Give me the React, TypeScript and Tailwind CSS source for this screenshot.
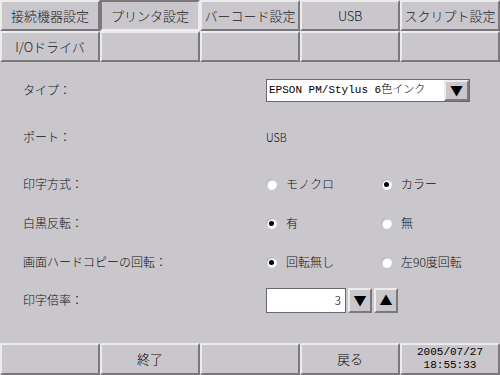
import React from "react";

const jp = { fontFamily: '"Noto Sans CJK JP", "Noto Sans", sans-serif' };
const mono = { fontFamily: '"Liberation Mono", "Noto Sans CJK JP", monospace' };

const bevel =
  "border-t-2 border-l-2 border-b-2 border-r-2 border-t-[#ececec] border-l-[#ececec] border-b-[#7a787c] border-r-[#7a787c]";
const sunk =
  "border-t-2 border-l-2 border-b-2 border-r-2 border-t-[#7a787c] border-l-[#7a787c] border-b-[#ececec] border-r-[#ececec]";

function Tab({ label, active, small }: { label?: string; active?: boolean; small?: boolean }) {
  return (
    <div
      className={`h-[31px] flex items-center justify-center bg-[#c9c6cc] text-[13px] text-[#1a1a1a] ${
        active ? sunk : bevel
      } ${small ? "text-[11px] tracking-tight" : ""}`}
    >
      {label}
    </div>
  );
}

function Radio({ checked, label }: { checked?: boolean; label: string }) {
  return (
    <div className="flex items-center gap-[9px]">
      <span className="w-[11px] h-[11px] rounded-full bg-white shadow-[inset_1px_1px_2px_rgba(0,0,0,0.35)] flex items-center justify-center">
        {checked && <span className="w-[5px] h-[5px] rounded-full bg-black" />}
      </span>
      <span className="text-[12px] text-[#111]">{label}</span>
    </div>
  );
}

function Row({ label, children, mt }: { label: string; children?: React.ReactNode; mt: string }) {
  return (
    <div className={`flex items-center h-[24px] ${mt}`}>
      <div className="w-[243px] text-[12px] text-[#111]">{label}</div>
      <div className="flex-1 flex items-center">{children}</div>
    </div>
  );
}

export default function App() {
  return (
    <div className="w-[500px] h-[375px] bg-[#c9c6cc] flex flex-col overflow-hidden font-light" style={jp}>
      <div className="grid grid-cols-5">
        <Tab label="接続機器設定" />
        <Tab label="プリンタ設定" active />
        <Tab label="バーコード設定" />
        <Tab label="USB" small />
        <Tab label="スクリプト設定" />
        <Tab label="I/Oドライバ" />
        <Tab />
        <Tab />
        <Tab />
        <Tab />
      </div>

      <div className="flex-1 flex flex-col pl-[23px] pt-[16px]">
        <Row label="タイプ：" mt="mt-0">
          <div className="w-[204px] h-[23px] bg-white border border-[#6a686c] flex items-center justify-between pl-[2px]">
            <span className="text-[11px] text-black" style={mono}>
              EPSON PM/Stylus 6色インク
            </span>
            <span className={`w-[25px] h-[21px] bg-[#c9c6cc] flex items-center justify-center text-[13px] ${bevel}`}>
              ▼
            </span>
          </div>
        </Row>
        <Row label="ポート：" mt="mt-[23px]">
          <span className="text-[12px] text-[#111] scale-x-90 origin-left">USB</span>
        </Row>
        <Row label="印字方式：" mt="mt-[23px]">
          <div className="w-[115px]">
            <Radio label="モノクロ" />
          </div>
          <Radio label="カラー" checked />
        </Row>
        <Row label="白黒反転：" mt="mt-[15px]">
          <div className="w-[115px]">
            <Radio label="有" checked />
          </div>
          <Radio label="無" />
        </Row>
        <Row label="画面ハードコピーの回転：" mt="mt-[15px]">
          <div className="w-[115px]">
            <Radio label="回転無し" checked />
          </div>
          <Radio label="左90度回転" />
        </Row>
        <Row label="印字倍率：" mt="mt-[14px]">
          <div className="flex items-center gap-[2px]">
            <div className="w-[80px] h-[25px] bg-white border border-[#6a686c] flex items-center justify-end pr-[4px] text-[12px]">
              3
            </div>
            <span className={`w-[24px] h-[25px] bg-[#c9c6cc] flex items-center justify-center text-[13px] ${bevel}`}>
              ▼
            </span>
            <span className={`w-[24px] h-[25px] bg-[#c9c6cc] flex items-center justify-center text-[13px] ${bevel}`}>
              ▲
            </span>
          </div>
        </Row>
      </div>

      <div className="grid grid-cols-5">
        <div className={`h-[32px] ${bevel}`} />
        <div className={`h-[32px] flex items-center justify-center text-[13px] ${bevel}`}>終了</div>
        <div className={`h-[32px] ${bevel}`} />
        <div className={`h-[32px] flex items-center justify-center text-[13px] ${bevel}`}>戻る</div>
        <div className={`h-[32px] flex flex-col items-center justify-center text-[11px] leading-[13px] ${bevel}`} style={mono}>
          <span>2005/07/27</span>
          <span>18:55:33</span>
        </div>
      </div>
    </div>
  );
}
